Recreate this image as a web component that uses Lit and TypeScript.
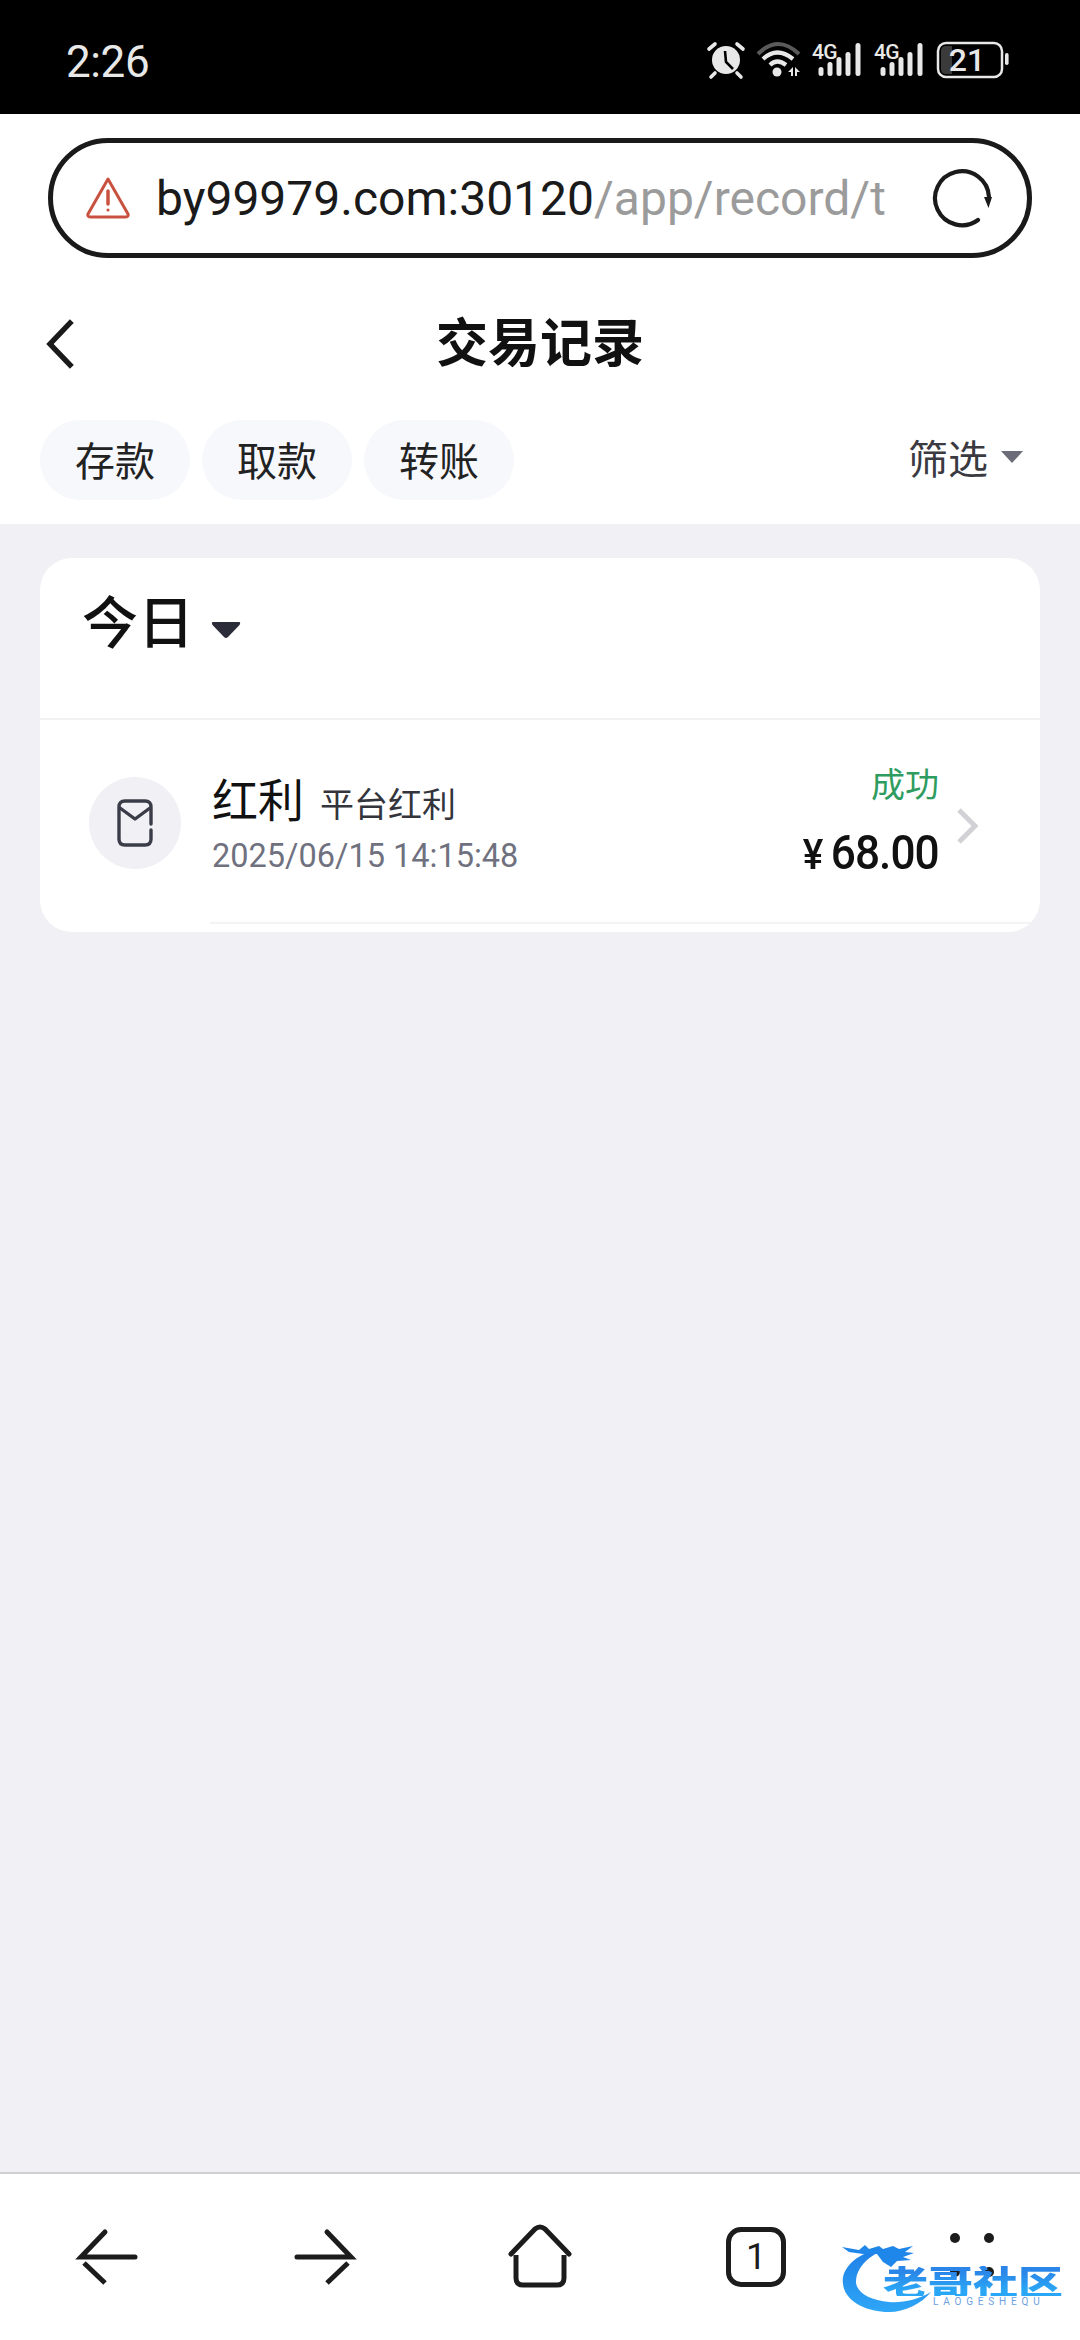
import { LitElement, html, css, svg } from "lit";
import { customElement } from "lit/decorators.js";

const CJK = css(["\"Noto Sans CJK SC\", \"Noto Sans\", sans-serif"] as any);

@customElement("app-root")
export class AppRoot extends LitElement {
  static styles = css`
    :host {
      display: flex;
      flex-direction: column;
      position: relative;
      width: 1080px;
      height: 2340px;
      overflow: hidden;
      background: #f0f0f5;
      font-family: Roboto, "Noto Sans CJK SC", sans-serif;
      color: #111;
    }
    svg { display: block; flex: none; }

    .status {
      height: 114px;
      background: #000;
      display: flex;
      align-items: center;
      justify-content: space-between;
      padding: 0 65px 0 66px;
      box-sizing: border-box;
      color: #e8e8e8;
      flex: none;
    }
    .time { font: 400 44px/1 Roboto, sans-serif; letter-spacing: -0.4px; margin-top: 10px; }
    .status-icons { margin-top: 8px; }

    .top { background: #fff; flex: none; height: 410px; box-sizing: border-box; padding-top: 24px; }
    .url {
      margin-left: 48px;
      width: 984px;
      height: 120px;
      box-sizing: border-box;
      border: 5px solid #1a1a1a;
      border-radius: 60px;
      display: flex;
      align-items: center;
      padding-left: 33px;
    }
    .url-text {
      margin-left: 26px;
      margin-top: 2px;
      width: 745px;
      white-space: nowrap;
      overflow: hidden;
      font: 400 48px/62px Roboto, sans-serif;
      color: #1a1a1a;
    }
    .url-text span { color: #9b9b9b; }
    .reload { margin-left: 30px; }

    .head {
      height: 132px;
      position: relative;
      display: flex;
      align-items: center;
      justify-content: center;
      margin-top: 20px;
    }
    .head h1 {
      margin: -8px 0 0;
      font: 700 52px/1 ${CJK};
      color: #111;
    }
    .back { position: absolute; left: 43px; top: 40px; }

    .tabs {
      display: flex;
      align-items: center;
      gap: 12px;
      padding: 0 57px 0 40px;
      height: 80px;
      margin-top: 10px;
    }
    .chip {
      width: 150px;
      height: 80px;
      box-sizing: border-box;
      padding-bottom: 3px;
      border-radius: 40px;
      background: #f7f8fc;
      display: flex;
      align-items: center;
      justify-content: center;
      font: 400 40px/1 ${CJK};
      color: #222;
    }
    .filter {
      margin-left: auto;
      display: flex;
      align-items: center;
      gap: 13px;
      font: 400 40px/1 ${CJK};
      color: #3a3a40;
      margin-top: -6px;
    }
    .tri { width: 22px; height: 12px; }

    .main { flex: 1; padding: 34px 40px 0; }
    .card {
      height: 374px;
      background: #fff;
      border-radius: 32px;
      overflow: hidden;
      position: relative;
    }
    .card-head {
      height: 162px;
      box-sizing: border-box;
      border-bottom: 2px solid #f2f2f5;
      display: flex;
      align-items: flex-start;
      padding: 27px 0 0 42px;
      gap: 17px;
    }
    .card-head b {
      font: 500 56px/1.2 ${CJK};
      color: #111;
    }
    .card-head svg { margin-top: 36px; }

    .row {
      height: 212px;
      display: flex;
      align-items: center;
      padding-left: 49px;
      position: relative;
    }
    .avatar {
      width: 92px;
      height: 92px;
      border-radius: 50%;
      background: #f0f0f5;
      display: flex;
      align-items: center;
      justify-content: center;
      margin-top: -7px;
      flex: none;
    }
    .info { margin-left: 31px; display: flex; flex-direction: column; margin-top: -6px; }
    .title { display: flex; align-items: baseline; gap: 16px; height: 54px; }
    .title b { font: 400 46px/54px ${CJK}; color: #111; }
    .title span { font: 400 34px/54px ${CJK}; color: #33343c; }
    .date { font: 400 32.5px/40px Roboto, sans-serif; color: #70717f; margin-top: 12px; }
    .right {
      margin-left: auto;
      display: flex;
      flex-direction: column;
      align-items: flex-end;
      margin-top: -10px;
    }
    .ok { font: 400 34px/44px ${CJK}; color: #2f9c5f; }
    .amt {
      font: 500 48px/54px Roboto, sans-serif;
      letter-spacing: -1px;
      color: #111;
      margin-top: 21px;
      display: flex;
      align-items: baseline;
      gap: 9px;
      transform: scaleX(0.92);
      transform-origin: right center;
    }
    .amt i { font-style: normal; font-size: 42px; }
    .chev { margin: 0 61px 0 16px; }
    .rule { position: absolute; left: 170px; right: 0; bottom: 8px; height: 2px; background: #f3f3f6; }

    .bar {
      height: 168px;
      flex: none;
      box-sizing: border-box;
      background: #fff;
      border-top: 2px solid #cfcfd2;
      display: grid;
      grid-template-columns: repeat(5, 216px);
      justify-items: center;
      padding-top: 43px;
    }
    .tabs-count {
      width: 60px; height: 60px; box-sizing: border-box; margin-top: 10px;
      border: 5px solid #1c1c1c; border-radius: 15px;
      display: flex; align-items: center; justify-content: center;
      font: 400 36px/1 Roboto, sans-serif; color: #1c1c1c;
    }
    .dots { display: grid; grid-template-columns: 10px 10px; gap: 24px 24px; margin-top: 16px; align-content: start; height: 44px; }
    .dots span { width: 10px; height: 10px; border-radius: 50%; background: #1c1c1c; }

    .logo { position: absolute; left: 841px; top: 2240px; width: 226px; height: 80px; }
    .logo svg { position: absolute; left: 0; top: 0; }
    .logo-cn {
      position: absolute; left: 42px; top: 21px; white-space: nowrap;
      font: 900 45px/40px ${CJK};
      transform: scaleY(0.75);
      color: #2196f0;
      background: linear-gradient(180deg, #2a86e8 20%, #2aa6f6 80%);
      -webkit-background-clip: text;
      background-clip: text;
      -webkit-text-fill-color: transparent;
    }
    .logo-en {
      position: absolute; left: 92px; top: 57px; white-space: nowrap;
      font: 400 10px/10px Roboto, sans-serif; letter-spacing: 4.8px; color: #6d9fe0;
    }
  `;

  private statusIcons() {
    return html`<svg class="status-icons" width="320" height="50" viewBox="695 36 320 50">
      <circle cx="726" cy="60" r="14" fill="#e8e8e8"></circle>
      <path d="M709 49 L715 44 M743 49 L737 44 M715 73 L711 77 M737 73 L741 77" stroke="#e8e8e8" stroke-width="3.6" stroke-linecap="round" fill="none"></path>
      <path d="M725 51 L726 62 L733 69" stroke="#000" stroke-width="2.6" fill="none"></path>

      <path d="M758 54 Q778 34 799 54" stroke="#5a5a5a" stroke-width="4" fill="none"></path>
      <path d="M763 59 Q777 46 793 59" stroke="#e8e8e8" stroke-width="4.2" fill="none"></path>
      <path d="M770 65 Q777 58 786 65" stroke="#e8e8e8" stroke-width="4.2" fill="none"></path>
      <circle cx="777" cy="72" r="4.5" fill="#e8e8e8"></circle>
      <path d="M788 72 L793 67 V76 H791 V72 Z M795 67 L800 72 H797 V76 H795 Z" fill="#e8e8e8"></path>

      ${this.signal(812)}
      ${this.signal(874)}

      <rect x="938" y="43" width="64" height="34" rx="8" fill="none" stroke="#e8e8e8" stroke-width="2.5"></rect>
      <path d="M941 51 Q941 46 946 46 H952 V74 H946 Q941 74 941 69 Z" fill="#3a3a3a"></path>
      <text x="967" y="71" text-anchor="middle" font-family="Roboto, sans-serif" font-weight="500" font-size="32" fill="#e8e8e8">21</text>
      <rect x="1005" y="53" width="3.6" height="12" rx="1.8" fill="#e8e8e8"></rect>
    </svg>`;
  }

  private signal(x: number) {
    const bars = [
      [9, 9],
      [18, 14],
      [27, 19],
      [36, 24],
      [46, 33],
    ];
    return svg`<g transform="translate(${x} 0)">
      <text x="0" y="59" font-family="Roboto, sans-serif" font-weight="500" font-size="21" letter-spacing="-0.8" fill="#e8e8e8">4G</text>
      ${bars.map(
        ([cx, h]) =>
          svg`<rect x="${cx - 2.5}" y="${76 - h}" width="5" height="${h}" rx="2.5" fill="#e8e8e8"></rect>`
      )}
    </g>`;
  }

  render() {
    return html`
      <div class="status">
        <div class="time">2:26</div>
        ${this.statusIcons()}
      </div>

      <div class="top">
        <div class="url">
          <svg width="44" height="44" viewBox="0 0 44 44" fill="none" stroke="#c8523f" stroke-width="3" stroke-linejoin="round" stroke-linecap="round">
            <path d="M22 3 L42 38 Q43 41 39 41 H5 Q1 41 2 38 Z"></path>
            <path d="M22 15 V28" stroke-width="3.5"></path>
            <circle cx="22" cy="34" r="1.6" fill="#c8523f" stroke="none"></circle>
          </svg>
          <div class="url-text">by99979.com:30120<span>/app/record/t</span></div>
          <svg class="reload" width="62" height="62" viewBox="0 0 62 62" fill="none" stroke="#1a1a1a" stroke-width="4.2" stroke-linecap="round">
            <path d="M47 53 A27 27 0 1 1 58 30"></path>
            <path d="M53 30 H61 L57.5 41 Z" fill="#1a1a1a" stroke="none"></path>
          </svg>
        </div>

        <div class="head">
          <svg class="back" width="34" height="52" viewBox="0 0 34 52" fill="none" stroke="#1a1a1a" stroke-width="5.4" stroke-linecap="square">
            <path d="M27 5 L7 26 L27 47"></path>
          </svg>
          <h1>交易记录</h1>
        </div>

        <div class="tabs">
          <div class="chip">存款</div>
          <div class="chip">取款</div>
          <div class="chip">转账</div>
          <div class="filter">
            筛选
            <svg class="tri" viewBox="0 0 22 12"><path d="M0 0 H22 L11 12 Z" fill="#6b6c77"></path></svg>
          </div>
        </div>
      </div>

      <div class="main">
        <div class="card">
          <div class="card-head">
            <b>今日</b>
            <svg width="30" height="18" viewBox="0 0 30 18"><path d="M2 1 H28 Q30 1 28.5 4 L17 16 Q15 18 13 16 L1.5 4 Q0 1 2 1 Z" fill="#2a2c3a"></path></svg>
          </div>
          <div class="row">
            <div class="avatar">
              <svg width="36" height="48" viewBox="0 0 36 48" fill="none" stroke="#3a3c48" stroke-width="3.4" stroke-linecap="round" stroke-linejoin="round">
                <path d="M34 25 V8 Q34 2 28 2 H8 Q2 2 2 8 V40 Q2 46 8 46 H28 Q34 46 34 40 V31"></path>
                <path d="M3 9 L18 20 L33 9"></path>
              </svg>
            </div>
            <div class="info">
              <div class="title"><b>红利</b><span>平台红利</span></div>
              <div class="date">2025/06/15 14:15:48</div>
            </div>
            <div class="right">
              <div class="ok">成功</div>
              <div class="amt"><i>¥</i>68.00</div>
            </div>
            <svg class="chev" width="24" height="38" viewBox="0 0 24 38" fill="none" stroke="#d2d2d6" stroke-width="5">
              <path d="M4 3 L20 19 L4 35"></path>
            </svg>
            <div class="rule"></div>
          </div>
        </div>
      </div>

      <div class="bar">
        <svg width="80" height="80" viewBox="0 0 80 80" fill="none" stroke="#1c1c1c" stroke-width="5" stroke-linecap="round">
          <path d="M67 40 H13 L37 15"></path>
          <path d="M16 46 L37 66" stroke-linecap="butt"></path>
        </svg>
        <svg width="80" height="80" viewBox="0 0 80 80" fill="none" stroke="#1c1c1c" stroke-width="5" stroke-linecap="round">
          <path d="M13 40 H67 L43 15"></path>
          <path d="M64 46 L43 66" stroke-linecap="butt"></path>
        </svg>
        <svg width="80" height="80" viewBox="0 0 80 80" fill="none" stroke="#1c1c1c" stroke-width="5" stroke-linecap="round" stroke-linejoin="round">
          <path d="M11 37 L35 12 Q40 8 45 12 L69 37"></path>
          <path d="M16 38 V61 Q16 68 23 68 H57 Q64 68 64 61 V38" stroke-linecap="butt"></path>
        </svg>
        <div class="tabs-count">1</div>
        <div class="dots"><span></span><span></span><span></span><span></span></div>
      </div>

      <div class="logo">
        <svg width="226" height="80" viewBox="0 0 226 80">
          <defs>
            <linearGradient id="lg" x1="0" y1="0" x2="0" y2="1">
              <stop offset="0" stop-color="#1f7fe6"></stop>
              <stop offset="1" stop-color="#2ea6f7"></stop>
            </linearGradient>
          </defs>
          <path d="M36 9 C12 16 0 30 2 44 C4 62 26 72 48 72 C64 72 80 64 90 52 C76 60 62 63 48 62 C28 60 14 52 15 40 C16 28 26 18 38 12 Z" fill="url(#lg)"></path>
          <path d="M1 7 L18 10 L24 5 L28 9 L38 6 L42 9 L52 6 L58 9 L72 6 L64 12 L73 13 L62 17 L70 20 L56 21 L50 27 L42 22 L36 14 L22 14 L8 12 Z" fill="#1f86ea"></path>
        </svg>
        <div class="logo-cn">老哥社区</div>
        <div class="logo-en">LAOGESHEQU</div>
      </div>
    `;
  }
}
